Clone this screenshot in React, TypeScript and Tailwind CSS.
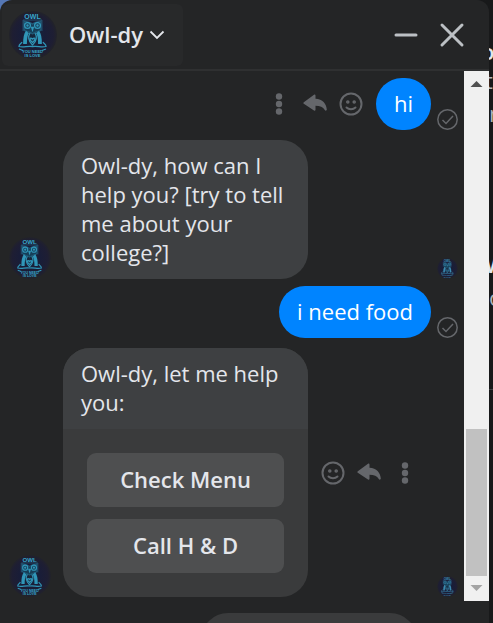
import type { ReactNode } from "react";

function OwlAvatar({ className, faded = false }: { className: string; faded?: boolean }) {
  return (
    <svg viewBox="0 0 48 48" className={`shrink-0 ${className}`} role="img" aria-label="Owl-dy">
      <defs>
        <radialGradient id="night">
          <stop offset="0" stopColor="#16283c" />
          <stop offset=".5" stopColor="#191d38" />
          <stop offset=".85" stopColor="#1e1e33" />
          <stop offset="1" stopColor="#222329" />
        </radialGradient>
      </defs>
      <circle cx="24" cy="24" r="24" fill="url(#night)" />
      <g fill="none" stroke={faded ? "#3a8ab0" : "#3096b8"} strokeWidth="1.300">
        <path d="M14 9v11M33 9v11M14 9h19" strokeOpacity=".3" />
        <path d="M15 10c3 1 6 1 8.500 3 2.500-2 5.500-2 8.500-3v9c-2 2-5 1-8.500 4-3.500-3-6.500-2-8.500-4z" fill="#17627f" fillOpacity=".45" strokeOpacity=".4" />
        <circle cx="18.500" cy="14.500" r="2.900" />
        <circle cx="28.500" cy="14.500" r="2.900" />
        <circle cx="18.500" cy="14.500" r=".6" />
        <circle cx="28.500" cy="14.500" r=".6" />
        <path d="M22.700 16.500l.8 2.500.8-2.500z" />
        <path d="M18.500 21c-2.500 3-2.500 7-2.500 12M28.500 21c2.500 3 2.500 7 2.500 12" strokeWidth="3.800" />
        <path d="M21 22c-2 3-2 8 2.500 12 4.500-4 4.500-9 2.500-12" />
        <path d="M23.500 31.500c-4-3-2.500-6 0-3.500 2.500-2.500 4 .5 0 3.500z" fill="#1a3a54" />
        <path d="M13 31c-1 2-3 2-3 4.500 5 1.500 8-1 13.500 0 5.500-1 8.500 1.500 13.500 0 0-2.500-2-2.500-3-4.500M10 38l4 1.500M37 38l-4 1.500" />
      </g>
      <g fill={faded ? "#3a8ab0" : "#38a8cb"} textAnchor="middle" className="font-['Liberation_Sans',sans-serif] font-bold">
        <text x="23.500" y="8" fontSize="7">OWL</text>
        <text x="23.500" y="42" fontSize="4">YOU NEED</text>
        <text x="23.500" y="46" fontSize="4">IS LOVE</text>
      </g>
    </svg>
  );
}

function Dots() {
  return (
    <svg viewBox="0 0 24 24" className="size-6" fill="currentColor">
      <circle cx="12" cy="4.500" r="3.200" />
      <circle cx="12" cy="12" r="3.200" />
      <circle cx="12" cy="19.500" r="3.200" />
    </svg>
  );
}

function Reply() {
  return (
    <svg viewBox="0 0 24 24" className="size-6" fill="currentColor">
      <path d="M.8 10.200 11 2.800c.7-.6 1.500-.1 1.500.7v3.200c7 .4 11 5 11.300 10.800 0 1.300-1.500 1.500-2 .5-1.800-3-4.700-4.200-9.300-4.200v4c0 .8-.8 1.200-1.500.7L.8 11.800c-.6-.5-.6-1.100 0-1.600z" />
    </svg>
  );
}

function Smile() {
  return (
    <svg viewBox="0 0 24 24" className="size-6" fill="none" stroke="currentColor" strokeWidth="2" strokeLinecap="round">
      <circle cx="12" cy="12" r="10.500" />
      <path d="M7.500 15.500c2.300 2.200 6.700 2.200 9 0" />
      <circle cx="8.800" cy="10" r=".8" />
      <circle cx="15.200" cy="10" r=".8" />
    </svg>
  );
}

function Sent() {
  return (
    <svg viewBox="0 0 21 21" className="size-[21px] text-[#65676b]" fill="none" stroke="currentColor" strokeWidth="1.500" role="img" aria-label="Sent">
      <circle cx="10.500" cy="10.500" r="9.700" />
      <path d="M5.500 11l3.500 3.500 7-7.500" />
    </svg>
  );
}

function Action({ label, children }: { label: string; children: ReactNode }) {
  return (
    <button aria-label={label} className="w-9 h-9 flex items-center justify-center">
      {children}
    </button>
  );
}

function Row({ mine = false, status, children }: { mine?: boolean; status: ReactNode; children: ReactNode }) {
  return (
    <li className="flex items-end pr-1.5">
      <div className="w-[63px] pl-[9px] shrink-0">{!mine && <OwlAvatar className="size-[42px]" />}</div>
      <div className={`flex flex-1 items-center ${mine ? "justify-end" : ""}`}>{children}</div>
      <div className="ml-1.5 shrink-0">{status}</div>
    </li>
  );
}

const read = <OwlAvatar className="size-[21px]" faded />;
const sentBubble = "rounded-[27px] bg-[#0084ff] text-white px-[18px] pt-[11px] pb-3";
const cardButton = "h-[54px] rounded-[9px] bg-[#4e4f50] pb-0.5 font-semibold";

export default function App() {
  return (
    <div className="flex h-screen overflow-hidden bg-[#18191a] font-['Open_Sans','Noto_Sans',sans-serif] text-[22px] leading-[29px] text-[#e4e6eb]">
      <div className="flex-1 min-w-0 bg-linear-to-r from-[#5577b5] from-5% to-[#18191a] to-5%">
        <section aria-label="Chat" className="flex flex-col h-full rounded-t-xl overflow-hidden bg-[#242526]">
          <header className="h-[71px] shrink-0 flex items-center justify-between border-b-2 border-[#2f3031] pl-0.5 pr-6">
            <button className="h-[62px] w-[181px] flex items-center rounded-md bg-[#28292a] pl-[7px] font-semibold">
              <OwlAvatar className="size-12" />
              <span className="ml-3">Owl-dy</span>
              <svg viewBox="0 0 16 16" className="size-4 ml-1.5" fill="none" stroke="currentColor" strokeWidth="1.800">
                <path d="M1.500 4.500 8 11l6.500-6.500" />
              </svg>
            </button>
            <div className="flex items-center gap-5 text-[#bcc0c4]">
              <button aria-label="Minimize">
                <svg viewBox="0 0 26 26" className="size-[26px]" stroke="currentColor" strokeWidth="3" strokeLinecap="round">
                  <path d="M3 13h20" />
                </svg>
              </button>
              <button aria-label="Close">
                <svg viewBox="0 0 26 26" className="size-[26px]" stroke="currentColor" strokeWidth="3" strokeLinecap="round">
                  <path d="M3 3l20 20M23 3 3 23" />
                </svg>
              </button>
            </div>
          </header>

          <div className="flex flex-1 min-h-0">
            <ol className="flex-1 min-w-0 pt-[7px] pb-1 flex flex-col overflow-hidden">
              <Row mine status={<Sent />}>
                <div className="flex mr-[7px] text-[#65676b]">
                  <Action label="More options"><Dots /></Action>
                  <Action label="Reply to hi"><Reply /></Action>
                  <Action label="React to hi"><Smile /></Action>
                </div>
                <p className={sentBubble}>hi</p>
              </Row>
              <li className="h-2.5" aria-hidden="true" />
              <Row status={read}>
                <p className="w-[245px] rounded-[27px] bg-[#3e4042] px-[18px] pt-[11px] pb-3">
                  Owl-dy, how can I help you? [try to tell me about your college?]
                </p>
              </Row>
              <li className="h-[7px]" aria-hidden="true" />
              <Row mine status={<Sent />}>
                <p className={sentBubble}>i need food</p>
              </Row>
              <li className="h-2.5" aria-hidden="true" />
              <Row status={read}>
                <div className="w-[245px] rounded-[27px] overflow-hidden bg-[#3a3b3c]">
                  <p className="bg-[#3e4042] px-[18px] pt-[11px] pb-3">Owl-dy, let me help you:</p>
                  <div className="flex flex-col gap-3 p-6">
                    <button className={cardButton}>Check Menu</button>
                    <button className={cardButton}>Call H &amp; D</button>
                  </div>
                </div>
                <div className="flex ml-[7px] text-[#65676b]">
                  <Action label="React"><Smile /></Action>
                  <Action label="Reply"><Reply /></Action>
                  <Action label="More options"><Dots /></Action>
                </div>
              </Row>
            </ol>
            <div className="w-[25px] shrink-0 bg-[#f0f0f0] flex flex-col items-center px-0.5">
              <svg viewBox="0 0 25 25" className="size-[25px] shrink-0" fill="#505050"><path d="M6.500 16 12.500 10l6 6z" /></svg>
              <div className="flex-1" />
              <div className="h-[147px] w-full bg-[#c1c1c1]" />
              <svg viewBox="0 0 25 25" className="size-[25px] shrink-0" fill="#a3a3a3"><path d="M6.500 9h12l-6 6z" /></svg>
            </div>
          </div>

          <footer className="h-[22px] shrink-0 pt-3 pl-[201px] pr-[72px] overflow-hidden">
            <input aria-label="Message" className="block w-full h-[54px] rounded-[27px] bg-[#3a3b3c] px-4" />
          </footer>
        </section>
      </div>
      <aside className="w-1 shrink-0 overflow-hidden whitespace-nowrap pt-[37px] text-[#b0b3b8]">
        <p className="-ml-2 font-semibold text-[#e4e6eb]">o</p>
        <p className="-ml-1">tu</p>
        <p className="mt-1">n</p>
        <p className="mt-[122px] -ml-1 font-semibold text-[#e4e6eb]">W</p>
        <p className="mt-1">o</p>
        <hr className="mt-[77px] border-[#3e4042]" />
      </aside>
    </div>
  );
}
